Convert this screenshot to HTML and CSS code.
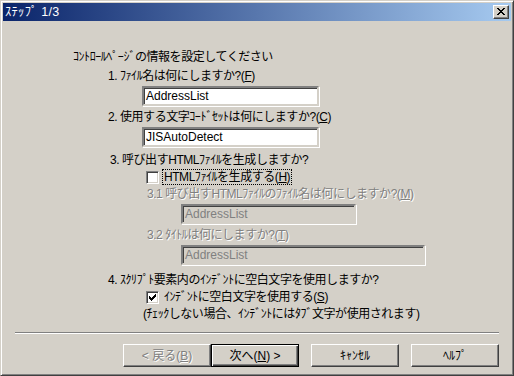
FILE: index.html
```html
<!DOCTYPE html>
<html lang="ja">
<head>
<meta charset="utf-8">
<title>ｽﾃｯﾌﾟ 1/3</title>
<link rel="stylesheet" href="styles.css">
</head>
<body>
<div class="window">
  <div class="titlebar">
    <span class="title">ｽﾃｯﾌﾟ 1/3</span>
    <span class="close">
      <svg width="8" height="7" viewBox="0 0 8 7" shape-rendering="crispEdges">
        <path d="M0 0h2v1h-2zM6 0h2v1h-2zM1 1h2v1h-2zM5 1h2v1h-2zM2 2h4v1h-4zM3 3h2v1h-2zM2 4h4v1h-4zM1 5h2v1h-2zM5 5h2v1h-2zM0 6h2v1h-2zM6 6h2v1h-2z" fill="#000"/>
      </svg>
    </span>
  </div>
  <div class="body">
    <p class="intro">ｺﾝﾄﾛｰﾙﾍﾟｰｼﾞの情報を設定してください</p>
    <p class="q q1">1. ﾌｧｲﾙ名は何にしますか?(<u>F</u>)</p>
    <div class="field main">AddressList</div>
    <p class="q q2">2. 使用する文字ｺｰﾄﾞｾｯﾄは何にしますか?(<u>C</u>)</p>
    <div class="field main">JISAutoDetect</div>
    <p class="q q3">3. 呼び出すHTMLﾌｧｲﾙを生成しますか?</p>
    <div class="check row1">
      <span class="box"></span>
      <span class="label focus">HTMLﾌｧｲﾙを生成する(<u>H</u>)</span>
    </div>
    <p class="sub s1 disabled">3.1 呼び出すHTMLﾌｧｲﾙのﾌｧｲﾙ名は何にしますか?(<u>M</u>)</p>
    <div class="field off short">AddressList</div>
    <p class="sub s2 disabled">3.2 ﾀｲﾄﾙは何にしますか?(<u>T</u>)</p>
    <div class="field off long">AddressList</div>
    <p class="q q4">4. ｽｸﾘﾌﾟﾄ要素内のｲﾝﾃﾞﾝﾄに空白文字を使用しますか?</p>
    <div class="check row2">
      <span class="box">
        <svg width="9" height="9" viewBox="0 0 9 9" shape-rendering="crispEdges">
          <path d="M1 3h1v3h-1zM2 4h1v3h-1zM3 5h1v3h-1zM4 4h1v3h-1zM5 3h1v3h-1zM6 2h1v3h-1zM7 1h1v3h-1z" fill="#000"/>
        </svg>
      </span>
      <span class="label">ｲﾝﾃﾞﾝﾄに空白文字を使用する(<u>S</u>)</span>
    </div>
    <p class="note">(ﾁｪｯｸしない場合、ｲﾝﾃﾞﾝﾄにはﾀﾌﾞ文字が使用されます)</p>
  </div>
  <div class="sep"></div>
  <div class="buttons">
    <div class="pair">
      <span class="btn disabled-btn"><span class="txt">&lt; 戻る(<u>B</u>)</span></span>
      <span class="btn default"><span class="txt">次へ(<u>N</u>) &gt;</span></span>
    </div>
    <span class="btn"><span class="txt">ｷｬﾝｾﾙ</span></span>
    <span class="btn"><span class="txt">ﾍﾙﾌﾟ</span></span>
  </div>
</div>
</body>
</html>
```

FILE: styles.css
```css
* { box-sizing: border-box; }
html, body { margin: 0; padding: 0; background: #d4d0c8; }
body {
  font-family: "Liberation Sans", "Noto Sans CJK JP", sans-serif;
  font-size: 12px;
  color: #000;
}
p { margin: 0; }
u { text-decoration: underline; text-underline-offset: 1px; }

.window {
  width: 514px;
  height: 376px;
  background: #d4d0c8;
  border: 1px solid;
  border-color: #d4d0c8 #404040 #404040 #d4d0c8;
  box-shadow: inset 1px 1px 0 #ffffff, inset -1px -1px 0 #808080;
  padding: 2px;
  display: flex;
  flex-direction: column;
}

.titlebar {
  height: 18px;
  background: linear-gradient(to right, #0a246a, #a6caf0);
  display: flex;
  align-items: center;
  justify-content: space-between;
  padding: 0 2px 0 2px;
}
.title {
  color: #fff;
  line-height: 18px;
  font-size: 12.5px;
  letter-spacing: 0.3px;
}
.close {
  width: 16px;
  height: 14px;
  background: #d4d0c8;
  border: 1px solid;
  border-color: #ffffff #404040 #404040 #ffffff;
  box-shadow: inset -1px -1px 0 #808080;
  display: flex;
  align-items: center;
  justify-content: center;
  padding: 0 0 1px 0;
}
.close svg { display: block; }

.body {
  display: flex;
  flex-direction: column;
  align-items: flex-start;
  line-height: 14px;
  letter-spacing: -0.45px;
}
.intro { margin: 29px 0 0 70px; }
.q { margin-left: 105px; }
.q1 { margin-top: 5px; }
.q2 { margin-top: 4px; }
.q3 { margin-top: 6px; margin-left: 107px; }
.q4 { margin-top: 8px; }

.field {
  height: 20px;
  border: 2px solid;
  border-color: #808080 #d4d0c8 #d4d0c8 #808080;
  box-shadow: inset 1px 1px 0 #404040, 1px 1px 0 #fff;
  background: #fff;
  padding: 0 2px;
  line-height: 16px;
  margin-top: 3px;
  letter-spacing: 0;
}
.field.main { width: 177px; margin-left: 139px; }
.field.off { background: #d4d0c8; color: #808080; margin-left: 178px; }
.field.short { width: 175px; }
.field.long { width: 244px; }

.check {
  display: flex;
  align-items: center;
  margin-left: 143px;
  height: 14px;
}
.row1 { margin-top: 3px; }
.row2 { margin-top: 3px; }
.box {
  width: 13px;
  height: 13px;
  border: 1px solid;
  border-color: #808080 #ffffff #ffffff #808080;
  box-shadow: inset 1px 1px 0 #404040, inset -1px -1px 0 #d4d0c8;
  background: #fff;
  display: flex;
  align-items: center;
  justify-content: center;
  margin-right: 4px;
}
.box svg { display: block; }
.label { padding: 0 1px; line-height: 14px; }
.focus { outline: 1px dotted #000; outline-offset: 0; }

.sub { margin-left: 144px; }
.s1 { margin-top: 3px; }
.s2 { margin-top: 4px; }
.disabled { color: #808080; text-shadow: 1px 1px 0 #ffffff; }

.note { margin: 3px 0 0 140px; }

.sep {
  margin: 11px 12px 0 12px;
  height: 2px;
  border-top: 1px solid #808080;
  border-bottom: 1px solid #ffffff;
}

.buttons {
  display: flex;
  justify-content: flex-end;
  gap: 12px;
  margin: 10px 12px 0 0;
}
.pair { display: flex; }
.btn {
  width: 88px;
  height: 23px;
  border: 1px solid;
  border-color: #ffffff #404040 #404040 #ffffff;
  box-shadow: inset -1px -1px 0 #808080;
  background: #d4d0c8;
  display: flex;
  align-items: center;
  justify-content: center;
  line-height: 14px;
}
.btn.default {
  border: 1px solid #000;
  box-shadow: inset 1px 1px 0 #ffffff, inset -1px -1px 0 #404040, inset -2px -2px 0 #808080;
}
.btn .txt { padding: 0 2px; }
.disabled-btn .txt { color: #808080; text-shadow: 1px 1px 0 #ffffff; }
```
